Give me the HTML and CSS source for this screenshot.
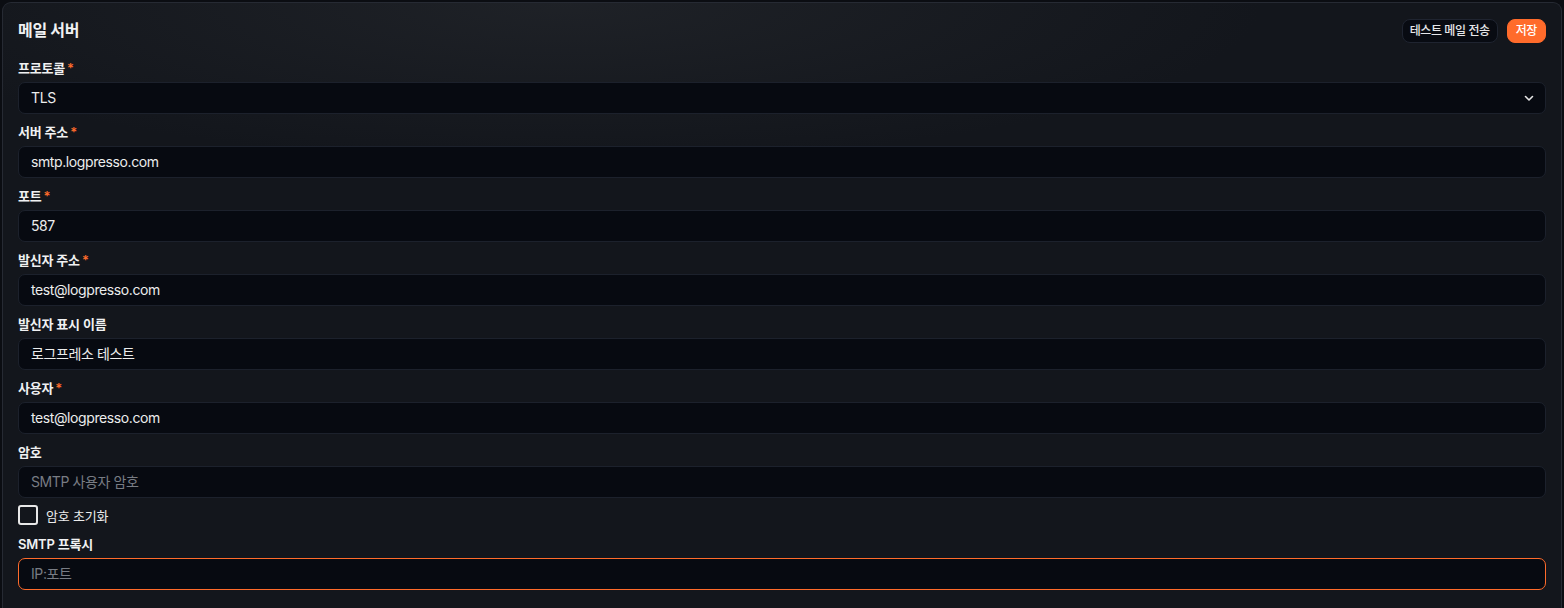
FILE: index.html
```html
<!DOCTYPE html>
<html lang="ko">
<head>
<meta charset="utf-8">
<link rel="stylesheet" href="styles.css">
</head>
<body>
<div class="page">
  <section class="card">
    <header class="card-head">
      <h2 class="title">메일 서버</h2>
      <div class="actions">
        <button class="btn btn-ghost">테스트 메일 전송</button>
        <button class="btn btn-primary">저장</button>
      </div>
    </header>
    <div class="form">
      <div class="field">
        <label class="label">프로토콜<span class="req">*</span></label>
        <div class="input select">
          <span>TLS</span>
          <svg class="chev" width="12" height="12" viewBox="0 0 12 12"><path d="M2.5 4.5 L6 8 L9.5 4.5" fill="none" stroke="#e6e6e6" stroke-width="1.6" stroke-linecap="round" stroke-linejoin="round"/></svg>
        </div>
      </div>
      <div class="field">
        <label class="label">서버 주소<span class="req">*</span></label>
        <div class="input">smtp.logpresso.com</div>
      </div>
      <div class="field">
        <label class="label">포트<span class="req">*</span></label>
        <div class="input">587</div>
      </div>
      <div class="field">
        <label class="label">발신자 주소<span class="req">*</span></label>
        <div class="input">test@logpresso.com</div>
      </div>
      <div class="field">
        <label class="label">발신자 표시 이름</label>
        <div class="input">로그프레소 테스트</div>
      </div>
      <div class="field">
        <label class="label">사용자<span class="req">*</span></label>
        <div class="input">test@logpresso.com</div>
      </div>
      <div class="field">
        <label class="label">암호</label>
        <div class="input placeholder">SMTP 사용자 암호</div>
        <div class="check-row">
          <span class="checkbox"></span>
          <span class="check-text">암호 초기화</span>
        </div>
      </div>
      <div class="field">
        <label class="label">SMTP 프록시</label>
        <div class="input placeholder focus">IP:포트</div>
      </div>
    </div>
  </section>
</div>
</body>
</html>
```
FILE: styles.css
```css
* { box-sizing: border-box; }
html, body { margin: 0; padding: 0; }
body {
  background: #0b0d12;
  font-family: "Inter", "Noto Sans CJK KR", sans-serif;
  color: #e9eaec;
  height: 608px;
  overflow: hidden;
}
.page { padding: 2px 2px 0 2px; height: 608px; }
.card {
  height: 606px;
  border: 1px solid #262a33;
  border-bottom: none;
  border-radius: 9px 9px 0 0;
  background:
    radial-gradient(ellipse 700px 160px at 560px 0px, rgba(40,43,48,0.55), rgba(40,43,48,0) 100%),
    #13161c;
  padding: 15px 15px 0 15px;
}
.card-head {
  display: flex;
  align-items: center;
  justify-content: space-between;
  height: 25px;
  margin-bottom: 15px;
}
.title {
  margin: 0 0 3px 0;
  font-size: 16px;
  font-weight: 700;
  letter-spacing: -0.3px;
  color: #f0f1f2;
}
.actions { display: flex; gap: 9px; align-items: center; }
.btn {
  font-family: inherit;
  font-size: 12px;
  font-weight: 500;
  height: 24px;
  padding: 0 7px;
  border-radius: 8px;
  cursor: pointer;
  line-height: 22px;
  letter-spacing: -0.4px;
}
.btn-ghost {
  background: #080b12;
  border: 1px solid #1f2430;
  color: #e6e7e9;
}
.btn-primary {
  background: #ff6b2b;
  border: 1px solid #ff6b2b;
  color: #ffffff;
  padding: 0 8px;
}
.form { display: flex; flex-direction: column; gap: 8px; }
.field { display: flex; flex-direction: column; }
.label {
  font-size: 13px;
  font-weight: 600;
  line-height: 20px;
  height: 20px;
  margin-bottom: 4px;
  color: #f0f1f2;
  letter-spacing: -0.2px;
}
.req { color: #ff6b2b; margin-left: 2px; }
.input {
  height: 32px;
  border: 1px solid #1c212c;
  border-radius: 7px;
  background: #070a11;
  padding: 0 12px;
  font-size: 14px;
  line-height: 30px;
  color: #eceded;
  letter-spacing: -0.4px;
}
.select {
  display: flex;
  align-items: center;
  justify-content: space-between;
  padding-right: 10px;
}
.placeholder { color: #787c84; }
.focus { border-color: #ff6b2b; }
.check-row {
  display: flex;
  align-items: center;
  gap: 8px;
  height: 22px;
  margin-top: 6px;
}
.checkbox {
  width: 20px;
  height: 20px;
  border: 2px solid #e8e8e8;
  border-radius: 3px;
}
.check-text { font-size: 13px; color: #eceded; letter-spacing: -0.2px; }
```
